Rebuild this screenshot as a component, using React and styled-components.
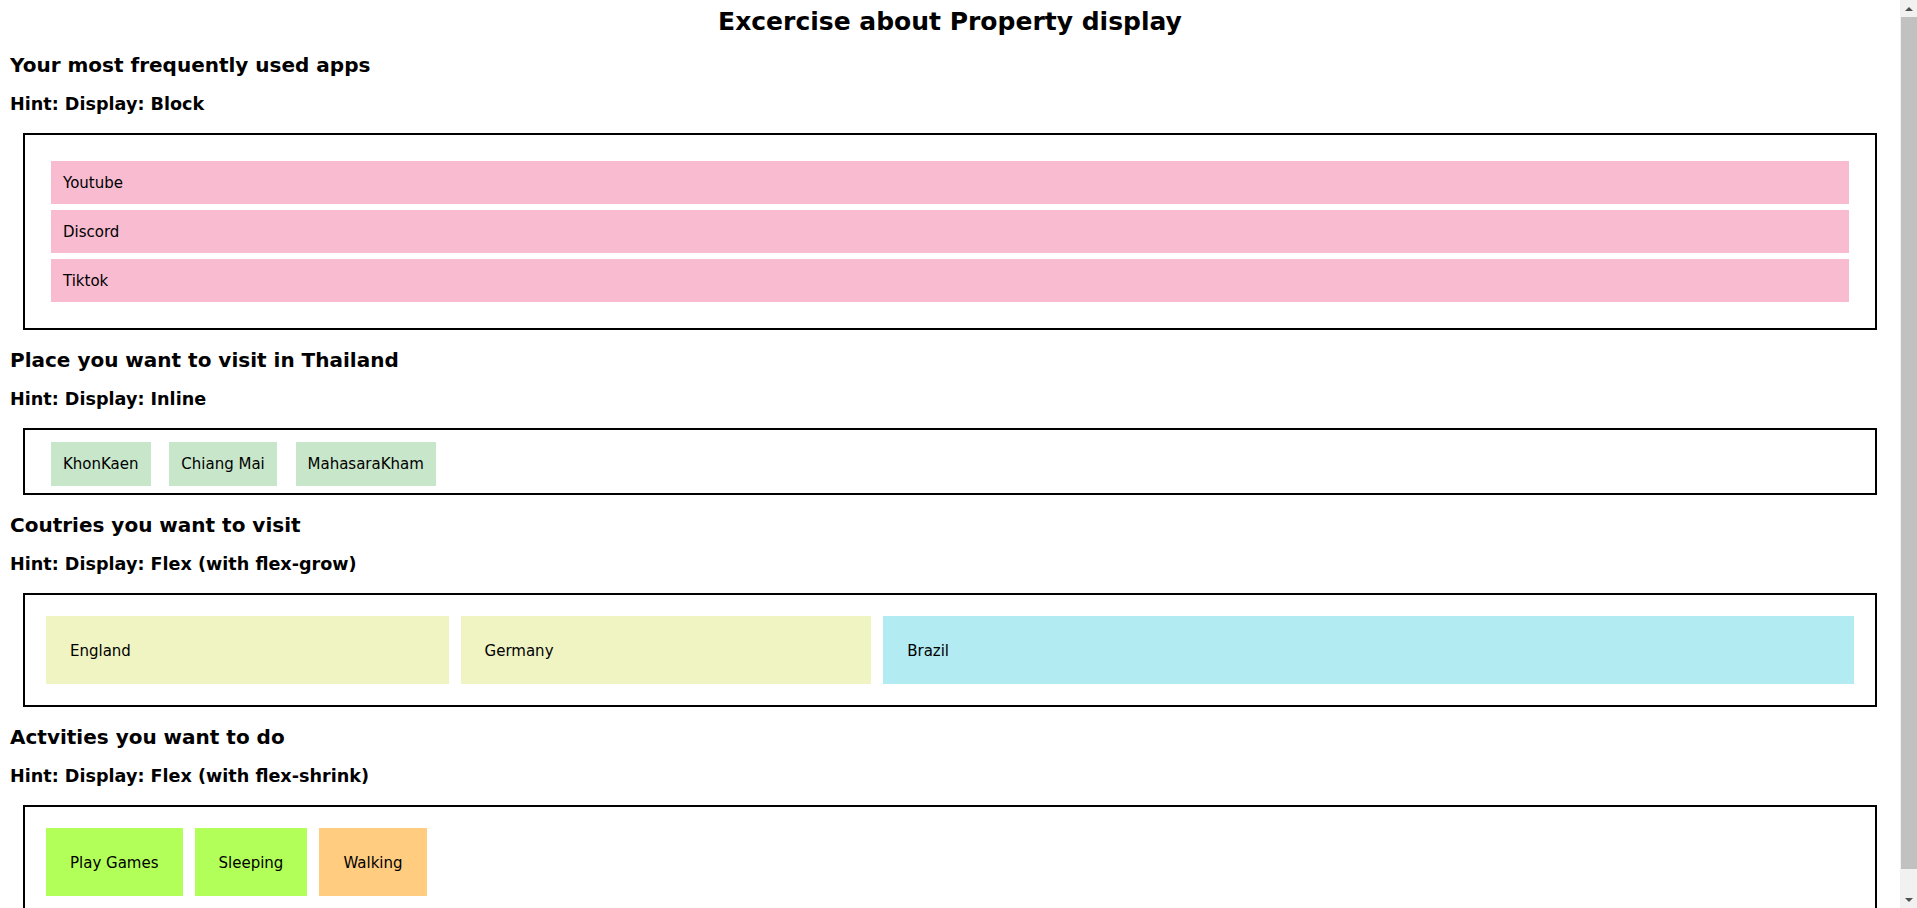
import styled, { createGlobalStyle } from "styled-components"

const GlobalStyle = createGlobalStyle`
body {
    margin: 0;
    overflow: hidden;
    font-family: "DejaVu Sans", Verdana, sans-serif;
    color: #000;
    background: #fff;
}
`

const Frame = styled.div`
display: flex;
height: 100vh;
overflow: hidden;
`

const Content = styled.div`
flex: 1;
min-width: 0;
overflow: hidden;
`

const ScrollBar = styled.div`
width: 17px;
flex-shrink: 0;
display: flex;
flex-direction: column;
background-color: #f1f1f1;
`

const ScrollButton = styled.div`
height: 17px;
flex-shrink: 0;
display: flex;
align-items: center;
justify-content: center;

&::before {
    content: "";
    border-left: 4px solid transparent;
    border-right: 4px solid transparent;
    ${(props) =>
        props.$down
            ? "border-top: 4px solid #505050;"
            : "border-bottom: 4px solid #505050;"}
}
`

const Thumb = styled.div`
height: 852px;
margin-left: 1px;
background-color: #c1c1c1;
`

const TrackRest = styled.div`
flex: 1;
`

const Page = styled.div`
padding: 7px 8px 14px;
`

const Title = styled.h1`
font-size: 25px;
font-weight: 700;
text-align: center;
margin: 0 0 17px;
`

const SectionTitle = styled.h3`
font-size: 20px;
font-weight: 700;
margin: 0 0 17px;
padding-left: 2px;
`

const Hint = styled.h4`
font-size: 17.6px;
font-weight: 700;
margin: 0 0 19px;
padding-left: 2px;
`

const Box = styled.div`
display: ${(props) => (props.$flex ? "flex" : "block")};
border: 2px solid #000;
margin: 0 15px 18px;
padding: ${(props) => props.$pad};
font-size: 15px;
line-height: 19px;
`

const AppItem = styled.div`
background-color: #f8bbd0;
margin: 6px;
padding: 13px 12px 11px;
line-height: 19px;
`

const Place = styled.span`
background-color: #c8e6c9;
padding: 13px 12px;
margin: 0 7px;
`

const Tile = styled.div`
flex-grow: ${(props) => props.$grow || 0};
background-color: ${(props) => props.$color};
margin: 6px;
padding: 25px 24px 23px;
line-height: 20px;
`

const Excercise = () => {
    return (
        <Page>
            <Title>Excercise about Property display</Title>

            <SectionTitle>Your most frequently used apps</SectionTitle>
            <Hint>Hint: Display: Block</Hint>
            <Box $pad="20px">
                <AppItem>Youtube</AppItem>
                <AppItem>Discord</AppItem>
                <AppItem>Tiktok</AppItem>
            </Box>

            <SectionTitle>Place you want to visit in Thailand</SectionTitle>
            <Hint>Hint: Display: Inline</Hint>
            <Box $pad="25px 19px 19px">
                <Place>KhonKaen</Place>{" "}
                <Place>Chiang Mai</Place>{" "}
                <Place>MahasaraKham</Place>
            </Box>

            <SectionTitle>Coutries you want to visit</SectionTitle>
            <Hint>Hint: Display: Flex (with flex-grow)</Hint>
            <Box $flex $pad="15px">
                <Tile $grow={1} $color="#f0f4c3">England</Tile>
                <Tile $grow={1} $color="#f0f4c3">Germany</Tile>
                <Tile $grow={3} $color="#b2ebf2">Brazil</Tile>
            </Box>

            <SectionTitle>Actvities you want to do</SectionTitle>
            <Hint>Hint: Display: Flex (with flex-shrink)</Hint>
            <Box $flex $pad="15px">
                <Tile $color="#b2ff59">Play Games</Tile>
                <Tile $color="#b2ff59">Sleeping</Tile>
                <Tile $color="#ffcc80">Walking</Tile>
            </Box>
        </Page>
    )
}

const App = () => {
    return (
        <>
            <GlobalStyle />
            <Frame>
                <Content>
                    <Excercise />
                </Content>
                <ScrollBar>
                    <ScrollButton />
                    <Thumb />
                    <TrackRest />
                    <ScrollButton $down />
                </ScrollBar>
            </Frame>
        </>
    )
}

export default App
